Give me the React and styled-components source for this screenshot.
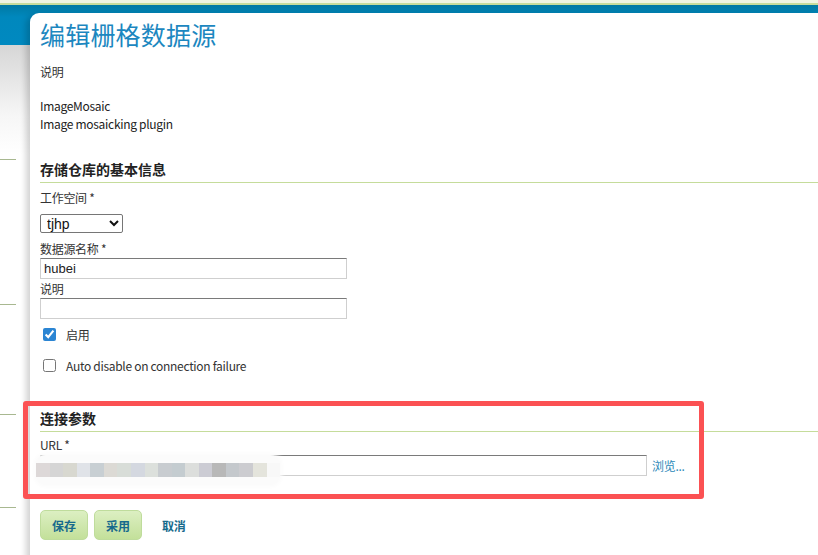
import React from "react";
import styled, { createGlobalStyle } from "styled-components";

const GlobalStyle = createGlobalStyle`
  html, body {
    margin: 0;
    padding: 0;
    background: #ffffff;
  }
  body {
    font-family: "Noto Sans CJK SC", "DejaVu Sans", sans-serif;
    font-size: 12px;
    letter-spacing: -0.3px;
    color: #333;
  }
`;

const blurColors = [
  "#ddd8d8", "#d5d5d5", "#d8d8d0", "#e0e3e8", "#c8cfd3", "#dcdad5",
  "#d8ddd8", "#d4d8e0", "#dce0dc", "#c8ccd0", "#c4ccd0", "#dcdedc",
  "#ccccd4", "#b8b8b8", "#c4c8cc", "#ccccd0", "#e4e4dc", "#f8f8f8",
];

const App = () => {
  return (
    <>
      <GlobalStyle />
      <Page>
        <TopLine />
        <Header />
        <Body>
          <Sidebar>
            <SideItem h={114} />
            <SideItem h={144} />
            <SideItem h={109} />
            <SideItem h={92} />
          </Sidebar>
          <Card>
            <Title>编辑栅格数据源</Title>
            <Label top={12}>说明</Label>
            <Desc>
              ImageMosaic
              <br />
              Image mosaicking plugin
            </Desc>

            <SectionTitle>存储仓库的基本信息</SectionTitle>
            <Label top={6}>工作空间 *</Label>
            <Select defaultValue="tjhp">
              <option value="tjhp">tjhp</option>
            </Select>
            <Label top={7}>数据源名称 *</Label>
            <TextInput defaultValue="hubei" />
            <Label top={1}>说明</Label>
            <TextInput />
            <CheckRow top={7}>
              <Check type="checkbox" defaultChecked />
              <span>启用</span>
            </CheckRow>
            <CheckRow top={15}>
              <Check type="checkbox" />
              <span>Auto disable on connection failure</span>
            </CheckRow>

            <Connection>
              <SectionTitle top={36}>连接参数</SectionTitle>
              <Label top={4}>URL *</Label>
              <UrlRow>
                <TextInput wide />
                <Browse href="#">浏览...</Browse>
              </UrlRow>
              <Mosaic>
                <MosaicStrip>
                  {blurColors.map((c, i) => (
                    <MosaicCell key={i} style={{ background: c }} />
                  ))}
                </MosaicStrip>
              </Mosaic>
              <Highlight />
            </Connection>

            <Buttons>
              <GreenButton>保存</GreenButton>
              <GreenButton>采用</GreenButton>
              <CancelLink href="#">取消</CancelLink>
            </Buttons>
          </Card>
        </Body>
      </Page>
    </>
  );
};

const Page = styled.div`
  width: 818px;
  height: 555px;
  overflow: hidden;
  background: #fff;
`;

const TopLine = styled.div`
  height: 3px;
  background: #eef4e2;
  border-bottom: 2px solid #c6dc9c;
`;

const Header = styled.div`
  height: 40px;
  background: linear-gradient(#0079a3, #0088bd 30%, #0089c0);
`;

const Body = styled.div`
  display: flex;
  align-items: flex-start;
`;

const Sidebar = styled.div`
  width: 30px;
  flex-shrink: 0;
  height: 510px;
  background: linear-gradient(#d6d6d6, #f6f6f6 70px, #ffffff 110px);
`;

const SideItem = styled.div`
  height: ${(p) => p.h}px;
  width: 16px;
  border-bottom: 1px solid #a8b890;
`;

const Card = styled.div`
  position: relative;
  flex: 1;
  margin-top: -32px;
  height: 560px;
  padding-left: 10px;
  background: #fff;
  border-top-left-radius: 9px;
  box-shadow: -4px 2px 6px rgba(0, 0, 0, 0.18);
`;

const Title = styled.h1`
  margin: 4px 0 0;
  font-size: 25px;
  font-weight: normal;
  line-height: 34px;
  color: #1c87c0;
  letter-spacing: 0.2px;
`;

const Label = styled.div`
  margin-top: ${(p) => p.top || 0}px;
  line-height: 18px;
  font-size: 12px;
  color: #333;
`;

const Desc = styled.div`
  margin-top: 16px;
  line-height: 18px;
  color: #222;
`;

const SectionTitle = styled.h3`
  margin: ${(p) => p.top || 27}px 0 0;
  padding-bottom: 3px;
  font-size: 14px;
  line-height: 19px;
  font-weight: bold;
  letter-spacing: 0;
  color: #222;
  border-bottom: 1px solid #c5dc9b;
`;

const Select = styled.select`
  display: block;
  margin-top: 7px;
  width: 83px;
  height: 19px;
  padding: 0 2px;
  font-family: "Liberation Sans", Arial, sans-serif;
  font-size: 14px;
  letter-spacing: 0;
  color: #111;
  border: 1px solid #767676;
  border-radius: 2px;
  background: #fff;
`;

const TextInput = styled.input`
  display: block;
  box-sizing: border-box;
  width: ${(p) => (p.wide ? 607 : 307)}px;
  height: 21px;
  padding: 1px 3px;
  font-family: "Liberation Sans", Arial, sans-serif;
  font-size: 13px;
  letter-spacing: 0;
  color: #222;
  border: 1px solid #cfcfcf;
  border-top-color: #7a7a7a;
  outline: none;
`;

const CheckRow = styled.label`
  display: flex;
  align-items: center;
  margin-top: ${(p) => p.top}px;
  height: 16px;
  color: #333;
`;

const Check = styled.input`
  width: 13px;
  height: 13px;
  margin: 0 10px 0 3px;
  accent-color: #2b85d3;
`;

const Connection = styled.div`
  position: relative;
`;

const UrlRow = styled.div`
  display: flex;
  align-items: center;
  margin-top: 1px;
`;

const Browse = styled.a`
  margin-left: 5px;
  color: #2b88b8;
  text-decoration: none;
  font-size: 12px;
`;

const Mosaic = styled.div`
  position: absolute;
  left: -4px;
  bottom: -9px;
  width: 244px;
  height: 30px;
  border-radius: 10px;
  background: #fbfbfb;
  box-shadow: 0 0 4px 2px #fbfbfb;
  display: flex;
  align-items: center;
`;

const MosaicStrip = styled.div`
  display: flex;
  width: 100%;
  height: 14px;
  filter: blur(0.6px);
`;

const MosaicCell = styled.div`
  flex: 1;
`;

const Highlight = styled.div`
  position: absolute;
  left: -17px;
  right: 114px;
  top: -8px;
  bottom: -23px;
  border: 5px solid #fb5153;
  border-radius: 3px;
  pointer-events: none;
`;

const Buttons = styled.div`
  display: flex;
  align-items: center;
  gap: 6px;
  margin-top: 34px;
`;

const GreenButton = styled.button`
  width: 48px;
  height: 30px;
  font-family: "Noto Sans CJK SC", sans-serif;
  font-size: 12px;
  font-weight: bold;
  color: #176a8c;
  background: linear-gradient(#dcefc2, #c3e09a);
  border: 1px solid #bfdc9c;
  border-radius: 5px;
`;

const CancelLink = styled.a`
  margin-left: 14px;
  font-weight: bold;
  font-size: 12px;
  color: #176a8c;
  text-decoration: none;
`;

export default App;
